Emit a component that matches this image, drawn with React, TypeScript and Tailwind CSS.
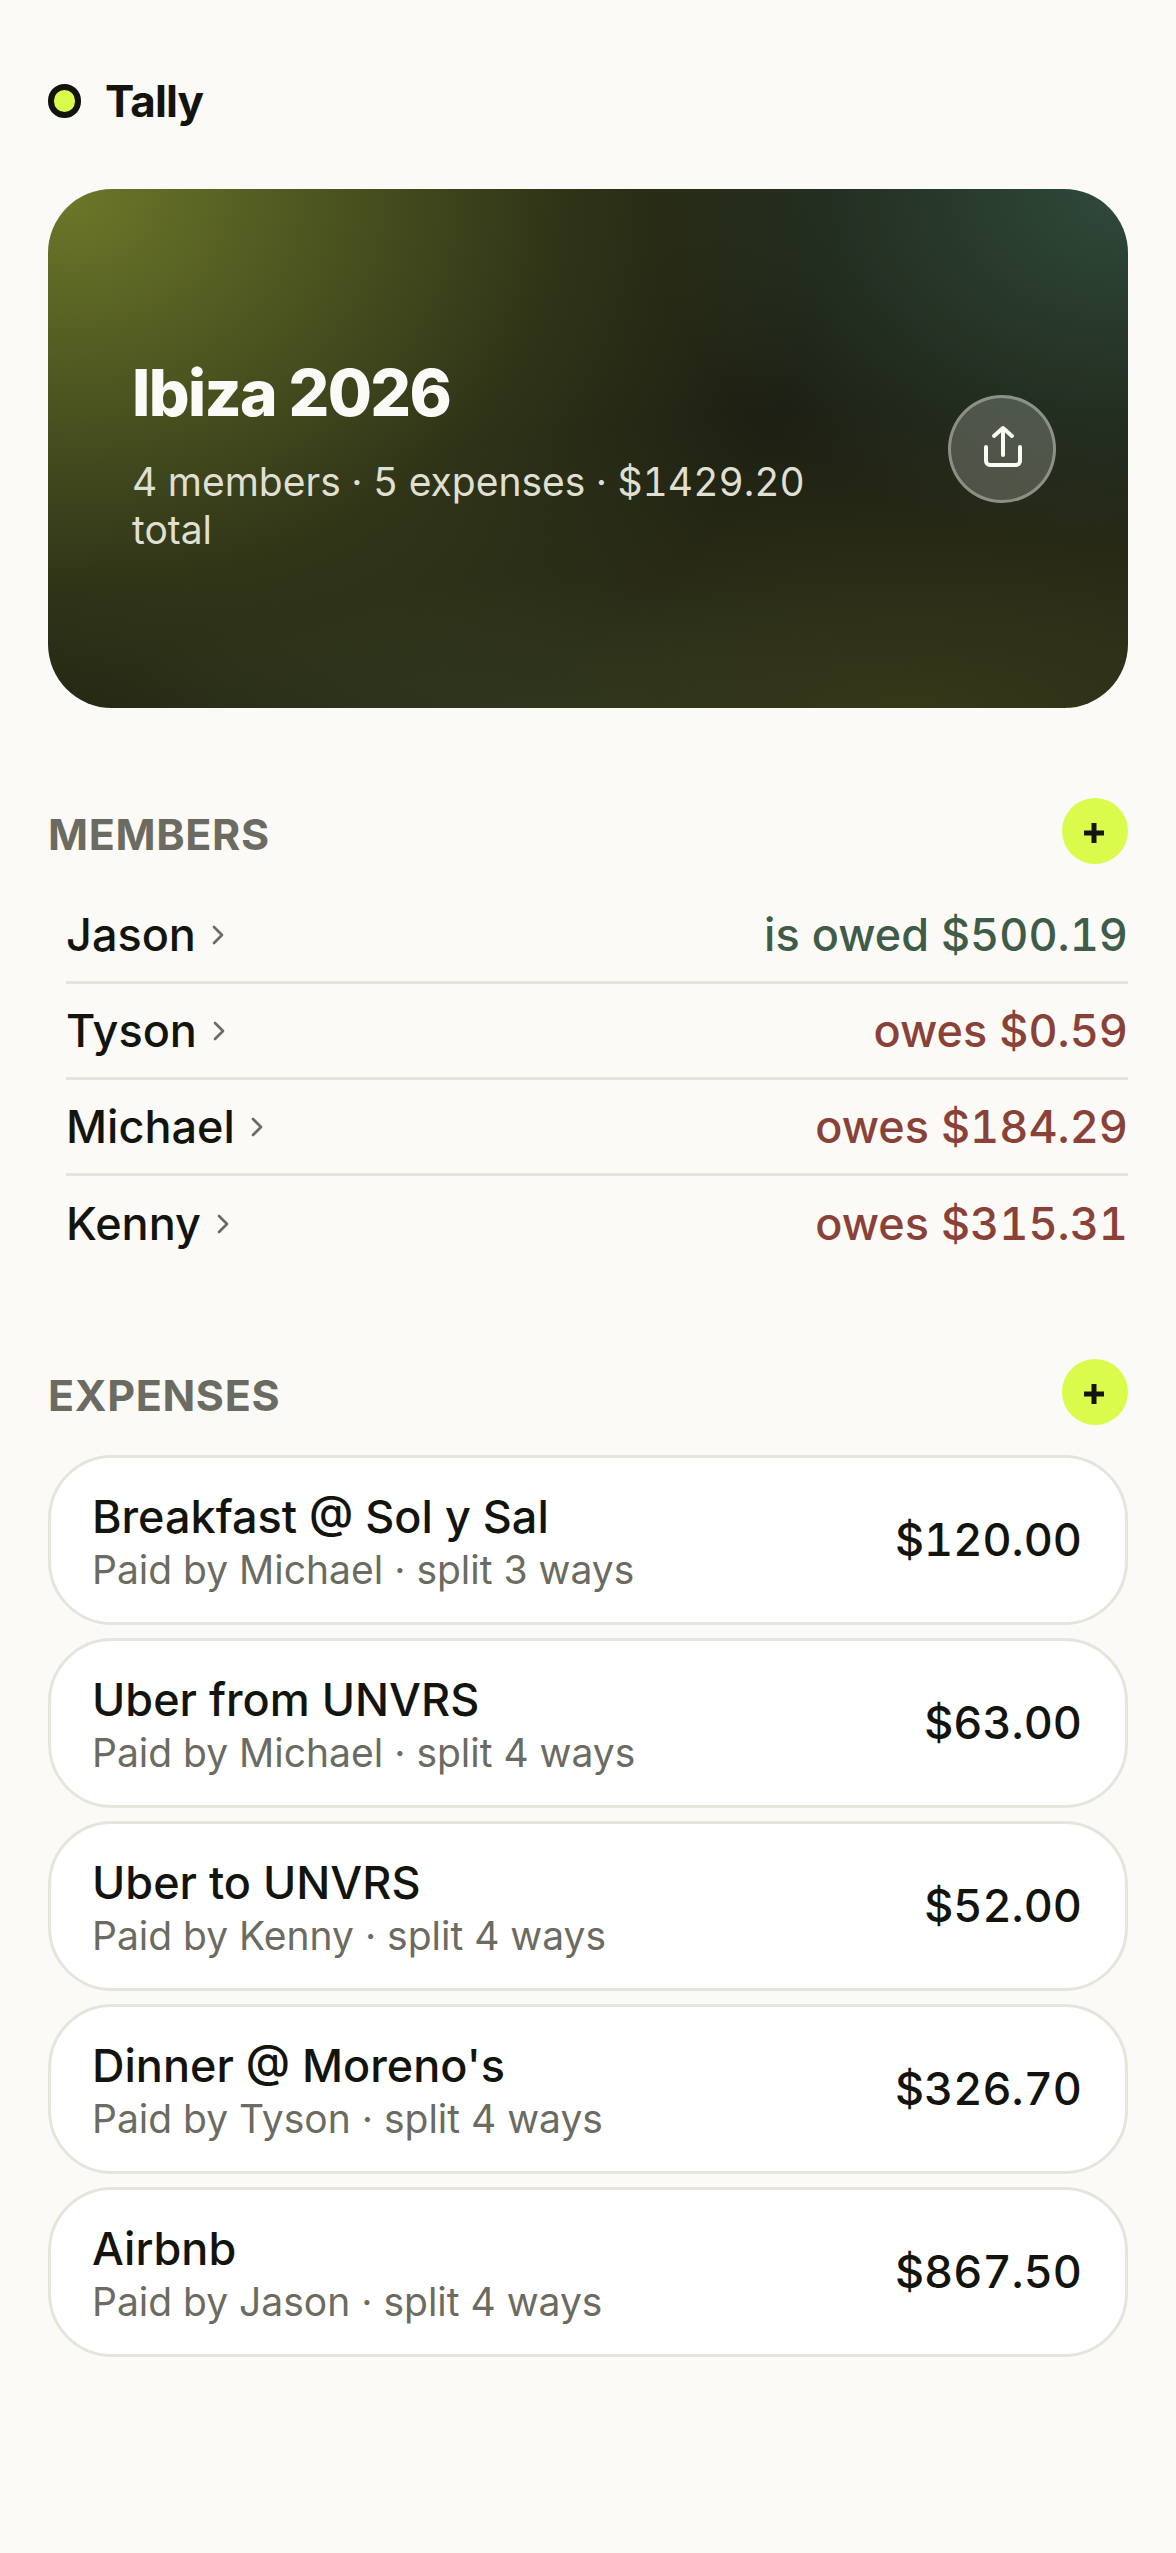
import { ChevronRight } from "lucide-react";

const MEMBERS = [
  { name: "Jason", balance: "is owed $500.19", owed: true },
  { name: "Tyson", balance: "owes $0.59", owed: false },
  { name: "Michael", balance: "owes $184.29", owed: false },
  { name: "Kenny", balance: "owes $315.31", owed: false },
];

const EXPENSES = [
  { title: "Breakfast @ Sol y Sal", meta: "Paid by Michael · split 3 ways", amount: "$120.00" },
  { title: "Uber from UNVRS", meta: "Paid by Michael · split 4 ways", amount: "$63.00" },
  { title: "Uber to UNVRS", meta: "Paid by Kenny · split 4 ways", amount: "$52.00" },
  { title: "Dinner @ Moreno's", meta: "Paid by Tyson · split 4 ways", amount: "$326.70" },
  { title: "Airbnb", meta: "Paid by Jason · split 4 ways", amount: "$867.50" },
];

function AddButton() {
  return (
    <button className="flex h-[66px] w-[66px] shrink-0 items-center justify-center rounded-full bg-[#d9fb4c]">
      <svg width="20" height="20" viewBox="0 0 20 20" fill="none" stroke="#14140f" strokeWidth="5" className="mt-[4px] mr-[2px]">
        <path d="M0 10h20M10 0v20" />
      </svg>
    </button>
  );
}

function SectionHeader({ title }: { title: string }) {
  return (
    <div className="flex items-center justify-between">
      <h2 className="mt-[6px] text-[43px] leading-none font-bold tracking-[0.015em] text-[#6b6b61]">{title}</h2>
      <AddButton />
    </div>
  );
}

export default function App() {
  return (
    <div className="min-h-[2553px] bg-[#fbfaf6] px-[48px] font-['Inter',sans-serif] text-[#14140f]">
      <header className="flex h-[189px] items-center gap-[24px] pt-[12px]">
        <span className="h-[34px] w-[33px] rounded-full border-[6px] border-[#14140f] bg-[#d9fb4c]" />
        <span className="text-[44px] leading-none font-bold tracking-[-0.02em]">Tally</span>
      </header>

      <section className="flex h-[519px] items-center gap-[56px] rounded-[64px] bg-[radial-gradient(ellipse_760px_600px_at_2%_2%,#6c7729_0%,rgba(92,102,36,0.8)_30%,rgba(70,78,30,0.45)_65%,rgba(60,66,26,0)_100%),radial-gradient(ellipse_480px_360px_at_100%_0%,#2f4a3b_0%,rgba(47,74,59,0.5)_50%,rgba(47,74,59,0)_100%),radial-gradient(ellipse_900px_300px_at_80%_100%,#36381a_0%,rgba(54,56,26,0.5)_50%,rgba(54,56,26,0)_100%),radial-gradient(ellipse_420px_130px_at_45%_100%,#263521_0%,rgba(38,53,33,0)_100%),linear-gradient(#1c1e12,#1c1e12)] pr-[72px] pl-[84px]">
        <div className="mt-[17px] min-w-0 flex-1">
          <h1 className="text-[64px] leading-none font-extrabold tracking-[-0.025em] text-[#fbfaf6]">Ibiza 2026</h1>
          <p className="mt-[33px] max-w-[700px] text-[39px] leading-[48px] text-[#dfdfd2] tabular-nums">4 members · 5 expenses · $1429.20 total</p>
        </div>
        <button className="flex h-[108px] w-[108px] shrink-0 items-center justify-center rounded-full border-[3px] border-white/35 bg-white/20">
          <svg width="44" height="48" viewBox="0 0 44 48" fill="none" stroke="#fbfaf6" strokeWidth="4" strokeLinecap="round" strokeLinejoin="round" className="mt-[-4px] ml-[2px]">
            <path d="M5 24v14a4 4 0 0 0 4 4h26a4 4 0 0 0 4-4V24" />
            <path d="M22 32V5M13 13l9-8 9 8" />
          </svg>
        </button>
      </section>

      <section className="mt-[90px]">
        <SectionHeader title="MEMBERS" />
        <ul className="mt-[24px] pl-[18px]">
          {MEMBERS.map((member, i) => (
            <li
              key={member.name}
              className={`flex h-[96px] items-center justify-between text-[45px] font-medium ${
                i < MEMBERS.length - 1 ? "border-b-[3px] border-[#e6e5dc]" : ""
              }`}
            >
              <span className="flex items-center gap-[6px]">
                {member.name}
                <ChevronRight size={32} strokeWidth={2} className="text-[#6b6b61]" />
              </span>
              <span className={`tabular-nums ${member.owed ? "text-[#3e5c47]" : "text-[#8a4238]"}`}>{member.balance}</span>
            </li>
          ))}
        </ul>
      </section>

      <section className="mt-[87px]">
        <SectionHeader title="EXPENSES" />
        <ul className="mt-[30px] flex flex-col gap-[13px]">
          {EXPENSES.map((expense) => (
            <li
              key={expense.title}
              className="flex h-[170px] items-center justify-between rounded-[64px] border-[3px] border-[#e6e5dc] bg-white pr-[43px] pl-[41px]"
            >
              <div className="mt-[3px]">
                <div className="text-[45px] leading-[54px] font-medium">{expense.title}</div>
                <div className="mt-[2px] text-[39px] leading-[48px] text-[#6b6b61]">{expense.meta}</div>
              </div>
              <span className="text-[45px] font-medium tabular-nums">{expense.amount}</span>
            </li>
          ))}
        </ul>
      </section>
    </div>
  );
}
